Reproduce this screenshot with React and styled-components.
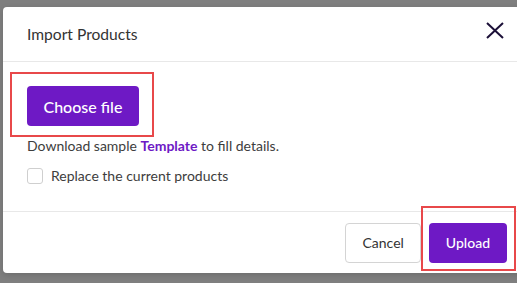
import React from 'react';
import styled, { createGlobalStyle } from 'styled-components';

const GlobalStyle = createGlobalStyle`
  html, body {
    margin: 0;
    padding: 0;
    overflow: hidden;
    background: #7f7f7f;
    font-family: Lato, "Noto Sans", sans-serif;
  }
`;

const Backdrop = styled.div`
  width: 517px;
  height: 283px;
  padding: 7px 0 0 3px;
  box-sizing: border-box;
`;

const Modal = styled.div`
  width: 520px;
  height: 266px;
  background: #fff;
  border-radius: 4px;
  display: flex;
  flex-direction: column;
  box-shadow: 0 2px 6px rgba(0, 0, 0, 0.15);
`;

const Header = styled.div`
  height: 54px;
  padding: 0 18px 0 24px;
  display: flex;
  align-items: center;
  justify-content: space-between;
  border-bottom: 1px solid #e8e8e8;
`;

const Title = styled.h2`
  margin: 0;
  font-size: 15.6px;
  font-weight: 400;
  color: #333;
`;

const CloseButton = styled.button`
  border: none;
  background: none;
  padding: 0;
  margin-bottom: 7px;
  width: 20px;
  height: 20px;
  display: flex;
  align-items: center;
  justify-content: center;
  cursor: pointer;
`;

const Body = styled.div`
  height: 150px;
  box-sizing: border-box;
  padding: 24px 24px 0;
  border-bottom: 1px solid #e8e8e8;
`;

const Highlighted = styled.div`
  position: relative;
  display: inline-flex;

  &::after {
    content: '';
    position: absolute;
    top: ${p => p.$top}px;
    right: ${p => p.$right}px;
    bottom: ${p => p.$bottom}px;
    left: ${p => p.$left}px;
    border: 2px solid #e8484a;
    pointer-events: none;
  }
`;

const PrimaryButton = styled.button`
  height: 40px;
  padding: 0 ${p => (p.$large ? 16.5 : 17)}px;
  border: none;
  border-radius: 4px;
  background: #6e19c5;
  color: #fff;
  font-family: inherit;
  font-size: ${p => (p.$large ? 16 : 14)}px;
  font-weight: 500;
  cursor: pointer;
`;

const SecondaryButton = styled.button`
  height: 40px;
  padding: 0 16px;
  border: 1px solid #d4d4d4;
  border-radius: 4px;
  background: #fff;
  color: #333;
  font-family: inherit;
  font-size: 14px;
  cursor: pointer;
`;

const Hint = styled.p`
  margin: 12px 0 0;
  line-height: 16px;
  font-size: 14px;
  color: #3d3d3d;
`;

const TemplateLink = styled.a`
  color: #6e19c5;
  font-weight: 700;
  text-decoration: none;
`;

const CheckRow = styled.label`
  margin-top: 13px;
  display: flex;
  align-items: center;
  gap: 8px;
  font-size: 14px;
  color: #3d3d3d;
`;

const Checkbox = styled.span`
  width: 16px;
  height: 16px;
  box-sizing: border-box;
  border: 1px solid #cfcfcf;
  border-radius: 3px;
`;

const Footer = styled.div`
  flex: 1;
  padding: 0 16px 0 0;
  display: flex;
  align-items: center;
  justify-content: flex-end;
  gap: 8px;
`;

export default function App() {
  return (
    <>
      <GlobalStyle />
      <Backdrop>
        <Modal>
          <Header>
            <Title>Import Products</Title>
            <CloseButton aria-label="Close">
              <svg width="18" height="17" viewBox="0 0 18 17">
                <path d="M1 1L17 16M17 1L1 16" stroke="#1c1038" strokeWidth="2" />
              </svg>
            </CloseButton>
          </Header>
          <Body>
            <Highlighted $top={-14} $right={-15} $bottom={-11} $left={-17}>
              <PrimaryButton $large>Choose file</PrimaryButton>
            </Highlighted>
            <Hint>
              Download sample <TemplateLink href="#">Template</TemplateLink> to fill details.
            </Hint>
            <CheckRow>
              <Checkbox />
              Replace the current products
            </CheckRow>
          </Body>
          <Footer>
            <SecondaryButton>Cancel</SecondaryButton>
            <Highlighted $top={-17} $right={-9} $bottom={-8} $left={-8}>
              <PrimaryButton>Upload</PrimaryButton>
            </Highlighted>
          </Footer>
        </Modal>
      </Backdrop>
    </>
  );
}
